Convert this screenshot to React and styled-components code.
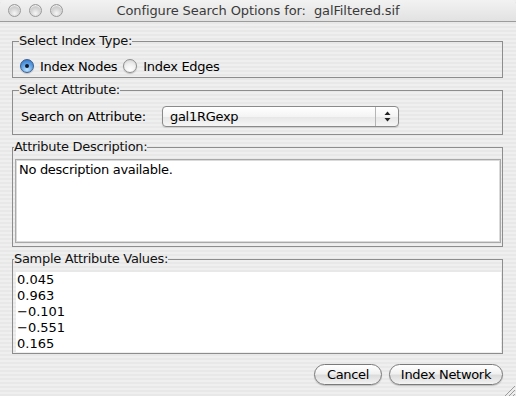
import React from 'react';
import styled, { createGlobalStyle } from 'styled-components';

const GlobalStyle = createGlobalStyle`
  body {
    margin: 0;
    font-family: "DejaVu Sans", "Liberation Sans", sans-serif;
    color: #000;
  }
`;

const Window = styled.div`
  width: 516px;
  height: 396px;
  overflow: hidden;
  display: flex;
  flex-direction: column;
  background: repeating-linear-gradient(
    to bottom,
    #efefef 0px,
    #efefef 2px,
    #e8e8e8 2px,
    #e8e8e8 4px
  );
`;

const TitleBar = styled.div`
  height: 21px;
  border-bottom: 1px solid #9c9c9c;
  display: grid;
  grid-template-columns: 1fr auto 1fr;
  align-items: center;
  background: linear-gradient(to bottom, #f2f2f2, #e2e2e2);
  border-top-left-radius: 5px;
  border-top-right-radius: 5px;
`;

const Lights = styled.div`
  display: flex;
  gap: 8px;
  padding-left: 8px;
`;

const Light = styled.span`
  width: 13px;
  height: 13px;
  border-radius: 50%;
  box-sizing: border-box;
  border: 1px solid #9a9a9a;
  background: radial-gradient(circle at 50% 75%, #f6f6f6 0%, #d6d6d6 45%, #b9b9b9 100%);
  box-shadow: inset 0 1px 1px rgba(255, 255, 255, 0.8);
`;

const Title = styled.div`
  font-size: 13px;
  color: #3a3a3a;
  white-space: pre;
  letter-spacing: -0.1px;
`;

const Content = styled.div`
  flex: 1;
  padding: 12px 13px 0 12px;
  display: flex;
  flex-direction: column;
  gap: 5px;
  letter-spacing: -0.3px;
`;

const Panel = styled.fieldset`
  margin: 0;
  border: 1px solid #8d8d8d;
  padding: ${p => p.$pad};
  min-width: 0;
`;

const Legend = styled.legend`
  padding: 0;
  margin-left: -1px;
  font-size: 13px;
  line-height: 14px;
  color: #111;
`;

const RadioRow = styled.div`
  display: flex;
  align-items: center;
  height: 16px;
  font-size: 13px;
`;

const RadioLabel = styled.label`
  display: flex;
  align-items: center;
  gap: 6px;
  margin-right: 6px;
`;

const RadioDot = styled.span`
  width: 14px;
  height: 14px;
  border-radius: 50%;
  box-sizing: border-box;
  position: relative;
  border: 1px solid ${p => (p.$on ? '#3a5d8f' : '#8e8e8e')};
  background: ${p =>
    p.$on
      ? 'radial-gradient(circle at 50% 80%, #bfe4ff 0%, #5fa3e6 50%, #2a6cc0 100%)'
      : 'radial-gradient(circle at 50% 80%, #ffffff 0%, #f0f0f0 50%, #cfcfcf 100%)'};
  box-shadow: 0 1px 1px rgba(0, 0, 0, 0.2);

  &::after {
    content: '';
    display: ${p => (p.$on ? 'block' : 'none')};
    position: absolute;
    left: 4px;
    top: 4px;
    width: 4px;
    height: 4px;
    border-radius: 50%;
    background: #111a2b;
  }
`;

const AttrRow = styled.div`
  display: flex;
  align-items: center;
  font-size: 13px;
  padding-left: 1px;
`;

const AttrLabel = styled.span`
  width: 141px;
`;

const Select = styled.div`
  width: 237px;
  height: 21px;
  box-sizing: border-box;
  border: 1px solid #8a8a8a;
  border-radius: 4px;
  background: linear-gradient(to bottom, #ffffff 0%, #f4f4f4 50%, #e6e6e6 51%, #f6f6f6 100%);
  display: flex;
  align-items: center;
  font-size: 13px;
  box-shadow: 0 1px 1px rgba(0, 0, 0, 0.12);
`;

const SelectValue = styled.span`
  flex: 1;
  padding-left: 7px;
`;

const SelectArrows = styled.span`
  width: 22px;
  height: 100%;
  border-left: 1px solid #b5b5b5;
  display: flex;
  align-items: center;
  justify-content: center;
`;

const TextArea = styled.div`
  height: 84px;
  box-sizing: border-box;
  background: #fff;
  border: 1px solid #a9a9a9;
  box-shadow: inset 0 0 0 1px #dadada;
  font-size: 13px;
  line-height: 15px;
  padding: 2px 3px;
`;

const List = styled.div`
  height: 80px;
  background: #fff;
  margin-left: 1px;
`;

const ListRow = styled.div`
  height: 16px;
  line-height: 16px;
  font-size: 13px;
  letter-spacing: 0;
  padding-left: 1px;
`;

const Buttons = styled.div`
  display: flex;
  justify-content: flex-end;
  gap: 7px;
  margin-top: 5px;
`;

const Button = styled.button`
  width: ${p => p.$w}px;
  height: 21px;
  box-sizing: border-box;
  border: 1px solid #7a7a7a;
  border-radius: 11px;
  font-family: inherit;
  font-size: 13px;
  letter-spacing: -0.3px;
  color: #000;
  padding: 0;
  background: linear-gradient(to bottom, #ffffff 0%, #f1f1f1 45%, #dcdcdc 55%, #f3f3f3 100%);
  box-shadow: 0 1px 1px rgba(0, 0, 0, 0.2);
`;

const Grip = styled.svg`
  align-self: flex-end;
  margin-top: auto;
  display: block;
`;

const samples = ['0.045', '0.963', '\u22120.101', '\u22120.551', '0.165'];

export default function App() {
  return (
    <>
      <GlobalStyle />
      <Window>
        <TitleBar>
          <Lights>
            <Light />
            <Light />
            <Light />
          </Lights>
          <Title>Configure Search Options for:  galFiltered.sif</Title>
          <span />
        </TitleBar>
        <Content>
          <Panel $pad="10px 8px 3px 7px">
            <Legend>Select Index Type:</Legend>
            <RadioRow>
              <RadioLabel>
                <RadioDot $on />
                Index Nodes
              </RadioLabel>
              <RadioLabel>
                <RadioDot />
                Index Edges
              </RadioLabel>
            </RadioRow>
          </Panel>
          <Panel $pad="9px 8px 7px 7px">
            <Legend>Select Attribute:</Legend>
            <AttrRow>
              <AttrLabel>Search on Attribute:</AttrLabel>
              <Select>
                <SelectValue>gal1RGexp</SelectValue>
                <SelectArrows>
                  <svg width="7" height="11" viewBox="0 0 7 11">
                    <path d="M3.5 0.5 L6.5 4 L0.5 4 Z" fill="#222" />
                    <path d="M3.5 10.5 L6.5 7 L0.5 7 Z" fill="#222" />
                  </svg>
                </SelectArrows>
              </Select>
            </AttrRow>
          </Panel>
          <Panel $pad="5px 1px 3px 2px">
            <Legend>Attribute Description:</Legend>
            <TextArea>No description available.</TextArea>
          </Panel>
          <Panel $pad="6px 1px 1px 2px">
            <Legend>Sample Attribute Values:</Legend>
            <List>
              {samples.map(s => (
                <ListRow key={s}>{s}</ListRow>
              ))}
            </List>
          </Panel>
          <Buttons>
            <Button $w={68}>Cancel</Button>
            <Button $w={114}>Index Network</Button>
          </Buttons>
        </Content>
        <Grip width="12" height="11" viewBox="0 0 12 11">
          <path d="M11 1 L1 11 M11 5 L5 11 M11 9 L9 11" stroke="#9a9a9a" strokeWidth="1" />
        </Grip>
      </Window>
    </>
  );
}
